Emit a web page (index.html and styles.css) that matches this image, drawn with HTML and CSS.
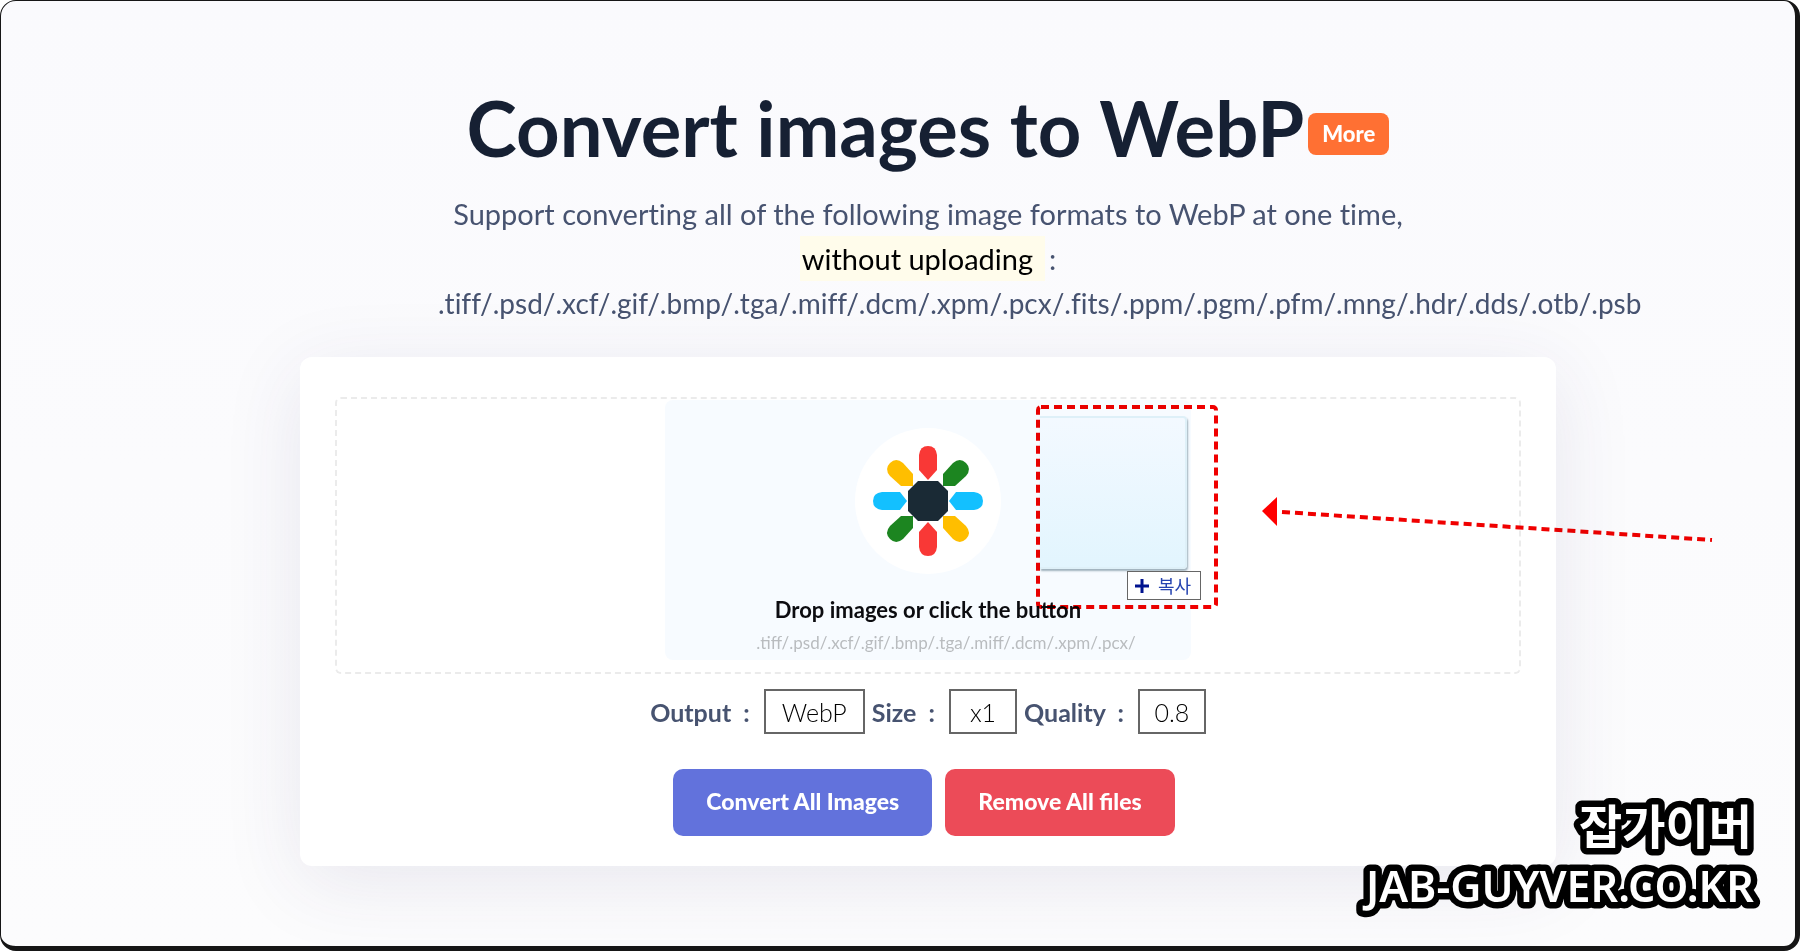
FILE: index.html
```html
<!DOCTYPE html>
<html lang="en">
<head>
<meta charset="utf-8">
<title>Convert images to WebP</title>
<link rel="stylesheet" href="styles.css">
</head>
<body>
<div class="frame">
  <main class="page">
    <header class="hero">
      <h1 class="title">Convert images to WebP<a class="more" href="#more">More</a></h1>
      <div class="lead">
        <p class="lead-line">Support converting all of the following image formats to WebP at one time,</p>
        <p class="lead-line lead-note"><mark class="mark">without uploading</mark><span>:</span></p>
        <p class="lead-types">.tiff/.psd/.xcf/.gif/.bmp/.tga/.miff/.dcm/.xpm/.pcx/.fits/.ppm/.pgm/.pfm/.mng/.hdr/.dds/.otb/.psb</p>
      </div>
    </header>
    <section class="card">
      <div class="dropzone">
        <button class="drop" type="button">
          <span class="disc">
            <svg class="flower" viewBox="-55 -55 110 110" aria-hidden="true">
              <path fill="#f93836" d="M0-21L-9-31V-46Q-8-55 0-55Q8-55 9-46V-31Z"/>
              <path fill="#f93836" d="M0 21L-9 31V46Q-8 55 0 55Q8 55 9 46V31Z"/>
              <path fill="#13c0ff" d="M-21 0L-28-9H-46Q-55-8-55 0Q-55 8-46 9H-28Z"/>
              <path fill="#13c0ff" d="M21 0L28-9H46Q55-8 55 0Q55 8 46 9H28Z"/>
              <path fill="#ffbe00" d="M-15-15V-27L-25-38Q-32-44-38-38Q-44-32-38-25L-27-15Z"/>
              <path fill="#ffbe00" d="M15 15V27L25 38Q32 44 38 38Q44 32 38 25L27 15Z"/>
              <path fill="#1c8520" d="M15-15V-27L25-38Q32-44 38-38Q44-32 38-25L27-15Z"/>
              <path fill="#1c8520" d="M-15 15V27L-25 38Q-32 44-38 38Q-44 32-38 25L-27 15Z"/>
              <path fill="#1a2a35" d="M-10-20H10L20-10V10L10 20H-10L-20 10V-10Z"/>
            </svg>
          </span>
          <span class="drop-title">Drop images or click the button</span>
          <span class="drop-types">.tiff/.psd/.xcf/.gif/.bmp/.tga/.miff/.dcm/.xpm/.pcx/</span>
        </button>
        <div class="overlay">
          <div class="ghost"></div>
          <div class="copy" lang="ko"><svg class="plus" viewBox="0 0 16 16" aria-hidden="true"><path d="M8 1V15M1 8H15" stroke="#00138f" stroke-width="3"/></svg>복사</div>
          <svg class="marks" viewBox="0 0 700 220" aria-hidden="true">
            <rect x="10" y="11" width="178" height="200" rx="3" fill="none" stroke="#f00000" stroke-width="4" stroke-dasharray="8 5"/>
            <path d="M254 116L684 144" stroke="#f00000" stroke-width="4" stroke-dasharray="8 5"/>
            <path d="M234 115L249 101V130Z" fill="#ff0000"/>
          </svg>
        </div>
      </div>
      <form class="options">
        <label for="output">Output&nbsp; :</label>
        <select id="output" class="wide"><option>WebP</option></select>
        <label for="size">Size&nbsp; :</label>
        <select id="size"><option>x1</option></select>
        <label for="quality">Quality&nbsp; :</label>
        <select id="quality"><option>0.8</option></select>
      </form>
      <div class="actions">
        <button class="btn convert" type="button">Convert All Images</button>
        <button class="btn remove" type="button">Remove All files</button>
      </div>
    </section>
  </main>
  <svg class="brand" viewBox="0 0 440 160">
    <text class="brand-ko" x="428" y="79" text-anchor="end" lang="ko">잡가이버</text>
    <text class="brand-en" x="430" y="137" text-anchor="end">JAB-GUYVER.CO.KR</text>
  </svg>
</div>
</body>
</html>
```
FILE: styles.css
```css
* { box-sizing: border-box; }
html { background: #fff; }
body {
  margin: 0;
  font-family: Lato, "Noto Sans CJK KR", sans-serif;
  font-variant-ligatures: none;
  color: #475370;
}
button, select { font-family: inherit; }

.frame {
  position: relative;
  min-height: 100vh;
  border: 1px solid #161616;
  border-width: 1px 5px 5px 1px;
  border-radius: 16px;
  background: linear-gradient(#fafafd, #fcfcfd);
  overflow: hidden;
}
.page {
  display: flex;
  flex-direction: column;
  align-items: center;
  padding: 87px 0 78px 60px;
}

.hero { width: 980px; }
.title {
  display: flex;
  justify-content: center;
  align-items: center;
  margin: 0;
  font-size: 76px;
  line-height: 80px;
  font-weight: 700;
  color: #162033;
  white-space: nowrap;
}
.more {
  margin: 12px 0 0 4px;
  padding: 0 14px;
  border-radius: 8px;
  background: #ff7033;
  color: #fff;
  font-size: 22px;
  line-height: 42px;
  font-weight: 900;
  text-decoration: none;
}
.lead {
  margin-top: 23px;
  line-height: 45px;
}
.lead p { margin: 0; }
.lead-line {
  font-size: 29px;
  text-align: center;
}
.lead-note {
  display: flex;
  justify-content: center;
  align-items: center;
}
.lead-types {
  font-size: 28px;
  white-space: nowrap;
}
.mark {
  margin-right: 4px;
  padding: 0 12px 0 2px;
  background: #fffceb;
  color: #000;
}

.card {
  width: 70%;
  min-width: 1256px;
  margin-top: 31px;
  padding: 40px 35px 30px;
  border-radius: 12px;
  background: #fff;
  box-shadow: 0 16px 80px rgba(60, 50, 110, 0.1);
}
.dropzone {
  position: relative;
  display: flex;
  justify-content: center;
  padding: 1px 0 12px;
  border: 2px dashed #ebebeb;
  border-radius: 6px;
}
.drop {
  display: flex;
  flex-direction: column;
  align-items: center;
  width: 526px;
  padding: 28px 0 2px;
  border: 0;
  border-radius: 8px;
  background: #f7fbff;
}
.disc {
  display: grid;
  place-items: center;
  width: 146px;
  height: 146px;
  border-radius: 50%;
  background: #fff;
}
.flower { width: 110px; height: 110px; }
.drop-title {
  margin-top: 18px;
  font-size: 22px;
  line-height: 36px;
  font-weight: 700;
  color: #0c0c10;
}
.drop-types {
  padding-left: 36px;
  font-size: 17px;
  line-height: 30px;
  color: #b9bcbf;
}

.overlay {
  position: absolute;
  left: 50%;
  top: 0;
  width: 700px;
  height: 220px;
  margin-left: 100px;
}
.ghost {
  position: absolute;
  left: 12px;
  top: 17px;
  width: 147px;
  height: 153px;
  border: 2px solid #def0f8;
  border-left: 0;
  border-radius: 0 4px 4px 0;
  background: linear-gradient(#f3f9ff, #e2f5fe);
  box-shadow: 1px 2px 2px #9fb2bd;
}
.copy {
  position: absolute;
  left: 99px;
  top: 172px;
  display: flex;
  align-items: center;
  gap: 8px;
  height: 29px;
  padding: 0 9px 0 6px;
  border: 1px solid #666;
  background: #fff;
  color: #2442b0;
  font-size: 18px;
  line-height: 26px;
  white-space: nowrap;
}
.plus { width: 16px; height: 16px; }
.marks {
  position: absolute;
  left: 0;
  top: -3px;
  width: 700px;
  height: 220px;
  mix-blend-mode: multiply;
}

.options {
  display: flex;
  justify-content: center;
  align-items: center;
  margin-top: 15px;
  font-size: 25px;
  line-height: 30px;
  font-weight: 700;
}
.options select {
  appearance: none;
  width: 68px;
  height: 45px;
  margin: 0 7px 0 14px;
  padding: 0;
  border: 2px solid #666;
  border-radius: 0;
  background: #fff;
  color: #000;
  font-size: 25px;
  font-weight: 300;
  text-align: center;
}
.options .wide { width: 101px; }
.options select:last-child { margin-right: 0; }
.actions {
  display: flex;
  justify-content: center;
  gap: 13px;
  margin-top: 35px;
  padding-right: 8px;
}
.btn {
  height: 67px;
  padding: 0 33px 4px;
  border: 0;
  border-radius: 10px;
  color: #fff;
  font-size: 23px;
  font-weight: 900;
}
.convert { background: #6272dc; }
.remove { background: #ec4b58; }

.brand {
  position: absolute;
  right: 31px;
  bottom: 21px;
  width: 440px;
  height: 160px;
  fill: #fff;
  stroke: #000;
  stroke-width: 13px;
  stroke-linejoin: round;
  paint-order: stroke fill;
}
.brand-en { font: 600 43px "Noto Sans", sans-serif; }
.brand-ko { font: 700 47px "Noto Sans CJK KR", sans-serif; }
```
